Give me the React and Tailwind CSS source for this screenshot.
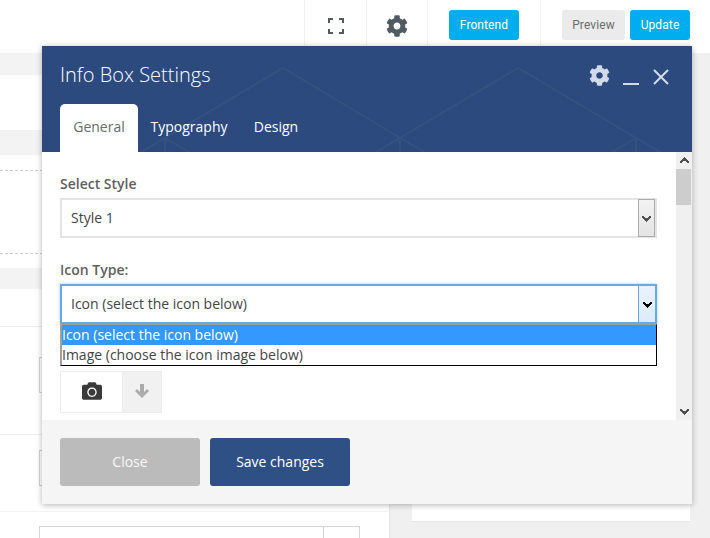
import React from 'react';
import { FaCamera, FaCog } from 'react-icons/fa';

function Chevron({ className }) {
  return (
    <svg width="9" height="7" viewBox="0 0 9 7" className={className}>
      <path d="M0 1h2v1h1v1h3V2h1V1h2v2H8v1H7v1H6v1H5v1H4V6H3V5H2V4H1V3H0z" fill="currentColor" />
    </svg>
  );
}

function Focus() {
  return (
    <svg width="16" height="16" viewBox="0 0 16 16" fill="none" stroke="#4f5a63" strokeWidth="2">
      <path d="M1 5V1h4M11 1h4v4M15 11v4h-4M5 15H1v-4" />
    </svg>
  );
}

function TopBar() {
  return (
    <div className="h-[53px] shrink-0 bg-white flex justify-end items-stretch font-[Roboto] text-xs tracking-[0.1px]">
      <div className="w-[62px] flex items-center justify-center pb-[1px] border-l border-[#f1f1f1]">
        <Focus />
      </div>
      <div className="w-[61px] flex items-center justify-center pb-[1px] border-l border-[#f1f1f1]">
        <FaCog className="text-[22px] text-[#4f5a63]" />
      </div>
      <div className="w-[113px] flex items-center pl-[21px] pb-[3px] border-l border-[#f1f1f1]">
        <div className="w-[70px] h-[30px] rounded-[3px] bg-[#00aeef] text-white flex items-center justify-center">Frontend</div>
      </div>
      <div className="w-[170px] flex items-center gap-[5px] pl-[21px] pr-[20px] pb-[3px] border-l border-[#f1f1f1]">
        <div className="w-[63px] h-[30px] rounded-[3px] bg-[#ebebeb] text-[#6b6b6b] flex items-center justify-center">Preview</div>
        <div className="w-[60px] h-[30px] rounded-[3px] bg-[#00aeef] text-white flex items-center justify-center">Update</div>
      </div>
    </div>
  );
}

function FieldBox() {
  return <div className="ml-[39px] w-[321px] h-[36px] border border-[#d4d4d4]" />;
}

function Page() {
  return (
    <div className="flex-1 flex bg-[#f0f0f0] min-h-0 overflow-hidden">
      <div className="w-[390px] shrink-0 bg-white border-r border-[#e6e6e6] flex flex-col [&>*]:shrink-0">
        <div className="h-[22px] bg-[#f3f3f3]" />
        <div className="h-[55px]" />
        <div className="h-[25px] bg-[#f3f3f3]" />
        <div className="h-[15px]" />
        <div className="h-[84px] border-y border-dashed border-[#cfcfcf]" />
        <div className="h-[14px]" />
        <div className="h-[21px] bg-[#f3f3f3]" />
        <div className="h-[38px] border-b border-[#eeeeee]" />
        <div className="h-[108px] border-b border-[#eeeeee] pt-[30px]">
          <FieldBox />
        </div>
        <div className="h-[77px] border-b border-[#f3f3f3] pt-[15px]">
          <FieldBox />
        </div>
        <div className="pt-[14px]">
          <div className="ml-[39px] w-[321px] h-[36px] border border-[#d4d4d4] flex justify-end">
            <div className="w-[36px] border-l border-[#d4d4d4]" />
          </div>
        </div>
      </div>
      <div className="ml-[22px] w-[278px] h-[469px] bg-white border-b border-[#e5e5e5]" />
    </div>
  );
}

function Header() {
  return (
    <div className="relative h-[106px] bg-[#2c4a7e] overflow-hidden">
      <svg className="absolute inset-0" width="650" height="106" fill="none" stroke="#34527f" strokeWidth="2">
        <path d="M99 106L241 22L382 106M334 106L476 22L618 106M123 92L147 106M123 92V106M358 91V106M594 92V106M594 92L570 106" />
      </svg>
      <div className="relative flex items-start justify-between pl-[18px] pr-[23px] pt-[15px]">
        <h4 className="text-xl font-light text-white leading-[28px]">Info Box Settings</h4>
        <div className="flex items-start text-[#d3dbe9] mt-[4px]">
          <FaCog className="text-[21px] mr-[13px]" />
          <svg width="16" height="21" viewBox="0 0 16 21" className="mr-[14px]" fill="none" stroke="currentColor" strokeWidth="2">
            <path d="M0 19h16" />
          </svg>
          <svg width="16" height="16" viewBox="0 0 16 16" className="mt-[4px]" fill="none" stroke="currentColor" strokeWidth="2">
            <path d="M1 1l14 14M15 1L1 15" />
          </svg>
        </div>
      </div>
      <div className="absolute left-[18px] bottom-0 flex text-sm">
        <div className="w-[78px] h-[48px] pb-[2px] rounded-t-[5px] bg-white text-[#6b6b6b] flex items-center justify-center">General</div>
        <div className="w-[102px] h-[48px] pb-[2px] text-white flex items-center justify-center">Typography</div>
        <div className="w-[50px] ml-[11px] h-[48px] pb-[2px] text-white flex items-center justify-center">Design</div>
      </div>
    </div>
  );
}

function Scrollbar() {
  return (
    <div className="w-[16px] bg-[#f0f0f0] flex flex-col items-center text-[#505050]">
      <div className="h-[17px] flex items-center justify-center">
        <Chevron className="rotate-180" />
      </div>
      <div className="w-[15px] h-[36px] bg-[#cdcdcd] self-start" />
      <div className="flex-1" />
      <div className="h-[17px] flex items-center justify-center">
        <Chevron />
      </div>
    </div>
  );
}

function Body() {
  return (
    <div className="relative h-[268px] bg-white flex">
      <div className="flex-1 pl-[18px] pt-[22px]">
        <label className="block text-sm font-semibold text-[#5f5f5f] leading-[19px]">Select Style</label>
        <div className="mt-[5px] h-[40px] w-[597px] border-2 border-[#e4e4e4] flex items-center justify-between">
          <span className="pl-[9px] text-sm text-[#444]">
            Style <span className="text-[#2c4a7e]">1</span>
          </span>
          <div className="w-[17px] h-[38px] bg-gradient-to-b from-[#f2f2f2] to-[#e4e4e4] border border-[#acacac] flex items-center justify-center text-[#505050]">
            <Chevron />
          </div>
        </div>
        <label className="block mt-[22px] text-sm font-semibold text-[#5f5f5f] leading-[19px]">Icon Type:</label>
        <div className="mt-[5px] h-[40px] w-[597px] border-2 border-[#66a9e6] flex items-center justify-between shadow-[0_0_3px_rgba(102,169,230,0.6)]">
          <span className="pl-[9px] text-sm text-[#444]">Icon (select the icon below)</span>
          <div className="w-[17px] h-[36px] bg-gradient-to-b from-[#eaf3fd] to-[#dcebfb] border-l border-[#66a9e6] flex items-center justify-center text-black">
            <Chevron />
          </div>
        </div>
        <div className="mt-[47px] flex h-[42px] w-[102px] border border-[#ececec]">
          <div className="w-[61px] pb-[3px] flex items-center justify-center text-[#3a3a3a] text-[20px]">
            <FaCamera />
          </div>
          <div className="flex-1 pb-[2px] bg-[#f1f1f1] border-l border-[#ececec] flex items-center justify-center text-[#ababab]">
            <svg width="14" height="14" viewBox="0 0 14 14">
              <path d="M7 14L0 7l2-2 3 3V0h4v8l3-3 2 2z" fill="currentColor" />
            </svg>
          </div>
        </div>
      </div>
      <Scrollbar />
      {/* open list of the Icon Type select */}
      <div className="absolute left-[18px] top-[172px] w-[597px] h-[42px] bg-white border-r border-b border-black border-l-2 border-l-[#a0a0a0] border-t border-t-[#a0a0a0] text-sm text-[#444] leading-[20px]">
        <div className="h-[20px] bg-[#3399ff] text-white">Icon (select the icon below)</div>
        <div className="h-[20px]">Image (choose the icon image below)</div>
      </div>
    </div>
  );
}

function Footer() {
  return (
    <div className="h-[84px] bg-[#f5f5f5] flex gap-[10px] pl-[18px] pt-[18px] text-sm">
      <div className="w-[140px] h-[48px] rounded-[3px] bg-[#bbbbbb] text-[#f8f8f8] flex items-center justify-center">Close</div>
      <div className="w-[140px] h-[48px] rounded-[3px] bg-[#2f5085] text-white flex items-center justify-center">Save changes</div>
    </div>
  );
}

export default function App() {
  return (
    <div className="relative w-[710px] h-[538px] overflow-hidden flex flex-col font-['Open_Sans',sans-serif]">
      <TopBar />
      <Page />
      <div className="absolute left-[42px] top-[46px] w-[650px] shadow-[0_1px_6px_rgba(0,0,0,0.3)]">
        <Header />
        <Body />
        <Footer />
      </div>
    </div>
  );
}
